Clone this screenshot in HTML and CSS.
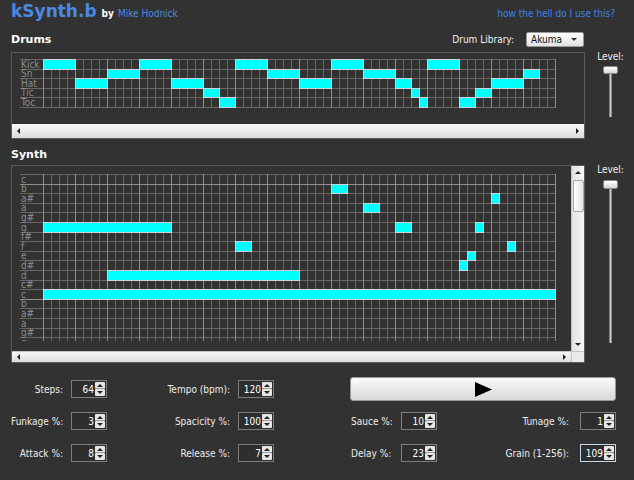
FILE: index.html
```html
<!DOCTYPE html>
<html>
<head>
<meta charset="utf-8">
<title>kSynth.b</title>
<link rel="stylesheet" href="styles.css">
</head>
<body>
<div class="app">
  <header class="top">
    <div class="brand"><span class="logo">kSynth.b</span><span class="by">by</span><a class="author" href="#">Mike Hodnick</a></div>
    <a class="help" href="#">how the hell do I use this?</a>
  </header>

  <div class="section-head">
    <h2>Drums</h2>
    <div class="lib"><span>Drum Library:</span><div class="select"><span>Akuma</span><span class="caret"></span></div></div>
  </div>
  <div class="section">
    <div class="panel">
      <div class="drum-view">
        <div class="seq drum-seq">
          <div class="lbl">Kick</div><div class="lbl">Sn</div><div class="lbl">Hat</div><div class="lbl">Tic</div><div class="lbl">Toc</div>
          <div class="note" style="grid-row:1;grid-column:2 / span 4"></div>
          <div class="note" style="grid-row:1;grid-column:14 / span 4"></div>
          <div class="note" style="grid-row:1;grid-column:26 / span 1"></div>
          <div class="note" style="grid-row:1;grid-column:27 / span 1"></div>
          <div class="note" style="grid-row:1;grid-column:28 / span 1"></div>
          <div class="note" style="grid-row:1;grid-column:29 / span 1"></div>
          <div class="note" style="grid-row:1;grid-column:38 / span 4"></div>
          <div class="note" style="grid-row:1;grid-column:50 / span 4"></div>
          <div class="note" style="grid-row:2;grid-column:10 / span 4"></div>
          <div class="note" style="grid-row:2;grid-column:30 / span 2"></div>
          <div class="note" style="grid-row:2;grid-column:32 / span 2"></div>
          <div class="note" style="grid-row:2;grid-column:42 / span 4"></div>
          <div class="note" style="grid-row:2;grid-column:62 / span 2"></div>
          <div class="note" style="grid-row:3;grid-column:6 / span 4"></div>
          <div class="note" style="grid-row:3;grid-column:18 / span 4"></div>
          <div class="note" style="grid-row:3;grid-column:34 / span 4"></div>
          <div class="note" style="grid-row:3;grid-column:46 / span 2"></div>
          <div class="note" style="grid-row:3;grid-column:58 / span 4"></div>
          <div class="note" style="grid-row:4;grid-column:22 / span 2"></div>
          <div class="note" style="grid-row:4;grid-column:48 / span 1"></div>
          <div class="note" style="grid-row:4;grid-column:56 / span 2"></div>
          <div class="note" style="grid-row:5;grid-column:24 / span 2"></div>
          <div class="note" style="grid-row:5;grid-column:49 / span 1"></div>
          <div class="note" style="grid-row:5;grid-column:54 / span 2"></div>
        </div>
      </div>
      <div class="hscroll drum-h"><span class="ar-l"></span><span class="ar-r"></span></div>
    </div>
    <div class="level">
      <div class="level-lbl">Level:</div>
      <div class="thumb"></div>
      <div class="track drum-track"></div>
    </div>
  </div>

  <div class="section-head synth-head">
    <h2>Synth</h2>
  </div>
  <div class="section synth-section">
    <div class="panel">
      <div class="synth-body">
        <div class="synth-view">
          <div class="clip">
            <div class="seq synth-seq">
              <div class="lbl">c</div><div class="lbl">b</div><div class="lbl">a#</div><div class="lbl">a</div><div class="lbl">g#</div><div class="lbl">g</div><div class="lbl">f#</div><div class="lbl">f</div><div class="lbl">e</div><div class="lbl">d#</div><div class="lbl">d</div><div class="lbl">c#</div><div class="lbl">c</div><div class="lbl">b</div><div class="lbl">a#</div><div class="lbl">a</div><div class="lbl">g#</div><div class="lbl">g</div>
              <div class="note" style="grid-row:2;grid-column:38 / span 2"></div>
              <div class="note" style="grid-row:3;grid-column:58 / span 1"></div>
              <div class="note" style="grid-row:4;grid-column:42 / span 2"></div>
              <div class="note" style="grid-row:6;grid-column:2 / span 16"></div>
              <div class="note" style="grid-row:6;grid-column:46 / span 2"></div>
              <div class="note" style="grid-row:6;grid-column:56 / span 1"></div>
              <div class="note" style="grid-row:8;grid-column:26 / span 2"></div>
              <div class="note" style="grid-row:8;grid-column:60 / span 1"></div>
              <div class="note" style="grid-row:9;grid-column:55 / span 1"></div>
              <div class="note" style="grid-row:10;grid-column:54 / span 1"></div>
              <div class="note" style="grid-row:11;grid-column:10 / span 24"></div>
              <div class="note" style="grid-row:13;grid-column:2 / span 64"></div>
            </div>
          </div>
        </div>
        <div class="vscroll">
          <div class="vbtn"><span class="ar-u"></span></div>
          <div class="vthumb"></div>
          <div class="vspace"></div>
          <div class="vbtn"><span class="ar-d"></span></div>
        </div>
      </div>
      <div class="synth-bottom">
        <div class="hscroll synth-h"><span class="ar-l"></span><span class="ar-r"></span></div>
        <div class="corner"></div>
      </div>
    </div>
    <div class="level">
      <div class="level-lbl">Level:</div>
      <div class="thumb synth-thumb"></div>
      <div class="track synth-track"></div>
    </div>
  </div>

  <div class="controls">
    <div class="lab c1">Steps:</div>
    <div class="num"><span>64</span><div class="spin"><div class="sb up"></div><div class="sb dn"></div></div></div>
    <div class="lab c2">Tempo (bpm):</div>
    <div class="num"><span>120</span><div class="spin"><div class="sb up"></div><div class="sb dn"></div></div></div>
    <div class="play"><svg width="17" height="15" viewBox="0 0 17 15"><path d="M0 0L17 7.5L0 15Z" fill="#000"/></svg></div>

    <div class="lab c1">Funkage %:</div>
    <div class="num"><span>3</span><div class="spin"><div class="sb up"></div><div class="sb dn"></div></div></div>
    <div class="lab c2">Spacicity %:</div>
    <div class="num"><span>100</span><div class="spin"><div class="sb up"></div><div class="sb dn"></div></div></div>
    <div class="lab c3">Sauce %:</div>
    <div class="num"><span>10</span><div class="spin"><div class="sb up"></div><div class="sb dn"></div></div></div>
    <div class="lab c4">Tunage %:</div>
    <div class="num"><span>1</span><div class="spin"><div class="sb up"></div><div class="sb dn"></div></div></div>

    <div class="lab c1">Attack %:</div>
    <div class="num"><span>8</span><div class="spin"><div class="sb up"></div><div class="sb dn"></div></div></div>
    <div class="lab c2">Release %:</div>
    <div class="num"><span>7</span><div class="spin"><div class="sb up"></div><div class="sb dn"></div></div></div>
    <div class="lab c3">Delay %:</div>
    <div class="num"><span>23</span><div class="spin"><div class="sb up"></div><div class="sb dn"></div></div></div>
    <div class="lab c4">Grain (1-256):</div>
    <div class="num focus"><span>109</span><div class="spin"><div class="sb up"></div><div class="sb dn"></div></div></div>
  </div>
</div>
</body>
</html>
```

FILE: styles.css
```css
* { box-sizing: border-box; }
html, body { margin: 0; padding: 0; }
body {
  background: #323232;
  color: #e8e8e8;
  font-family: "DejaVu Sans Condensed", "DejaVu Sans", sans-serif;
  font-size: 10px;
  width: 634px;
  height: 480px;
  overflow: hidden;
}
.app { padding-left: 11px; }

/* header */
.top {
  display: flex;
  justify-content: space-between;
  align-items: baseline;
  height: 28px;
  padding-right: 19px;
}
.brand { display: flex; align-items: baseline; }
.logo {
  font-family: "DejaVu Sans", sans-serif;
  font-weight: bold;
  font-size: 17px;
  line-height: 22px;
  color: #4a89e4;
}
.by { color: #fff; font-weight: bold; margin-left: 5px; }
.author { color: #4a89e4; text-decoration: none; margin-left: 4px; }
.help { color: #3f82ea; text-decoration: none; }

/* section heads */
.section-head {
  display: flex;
  justify-content: space-between;
  align-items: center;
  width: 573px;
  height: 15px;
  margin-top: 4px;
}
.synth-head { margin-top: 8px; }
h2 {
  margin: 0;
  font-family: "DejaVu Sans", sans-serif;
  font-weight: bold;
  font-size: 11px;
  line-height: 15px;
  color: #fff;
}
.lib { display: flex; align-items: center; gap: 12px; color: #f0f0f0; }
.select {
  width: 58px;
  height: 15px;
  background: linear-gradient(#ffffff, #e2e2e2);
  border: 1px solid #9a9a9a;
  border-radius: 2px;
  color: #111;
  display: flex;
  align-items: center;
  justify-content: space-between;
  padding: 0 6px 0 4px;
}
.caret {
  width: 0; height: 0;
  border-top: 3px solid #333;
  border-left: 3px solid transparent;
  border-right: 3px solid transparent;
}

/* sections */
.section { display: flex; gap: 13px; margin-top: 5px; align-items: flex-start; }
.synth-section { margin-top: 3px; }
.panel { width: 574px; border: 1px solid #5c5c5c; }
.drum-view { height: 71px; padding: 6px 0 0 8px; }

.seq {
  --ln: #676767;
  --bt: #8e8e8e;
  display: grid;
  grid-template-columns: 23px repeat(64, 8px) 1px;
  width: 536px;
  background:
    repeating-linear-gradient(to right, var(--bt) 0 1px, transparent 1px 32px) 23px 0 / 513px 100% no-repeat,
    repeating-linear-gradient(to right, var(--ln) 0 1px, transparent 1px 8px) 23px 0 / 513px 100% no-repeat,
    repeating-linear-gradient(to bottom, var(--ln) 0 1px, transparent 1px 10px, var(--ln) 10px 11px, transparent 11px 19px, var(--ln) 19px 20px, transparent 20px 29px, var(--ln) 29px 30px, transparent 30px 38px, var(--ln) 38px 39px, transparent 39px 48px);
}
.drum-seq { grid-template-rows: 10px 9px 10px 9px 10px 1px; }
.synth-seq {
  grid-template-rows: repeat(4, 10px 9px 10px 9px 10px);
  background:
    linear-gradient(var(--bt), var(--bt)) 0 10px / 100% 1px no-repeat,
    linear-gradient(var(--bt), var(--bt)) 0 125px / 100% 1px no-repeat,
    repeating-linear-gradient(to right, var(--bt) 0 1px, transparent 1px 32px) 23px 0 / 513px 100% no-repeat,
    repeating-linear-gradient(to right, var(--ln) 0 1px, transparent 1px 8px) 23px 0 / 513px 100% no-repeat,
    repeating-linear-gradient(to bottom, var(--ln) 0 1px, transparent 1px 10px, var(--ln) 10px 11px, transparent 11px 19px, var(--ln) 19px 20px, transparent 20px 29px, var(--ln) 29px 30px, transparent 30px 38px, var(--ln) 38px 39px, transparent 39px 48px);
}
.lbl {
  grid-column: 1;
  align-self: end;
  font-size: 10px;
  line-height: 9px;
  height: 9px;
  color: #8c8c8c;
  padding-left: 1px;
  white-space: nowrap;
}
.note {
  background: #00ffff;
  border: 1px solid #d2d2d2;
  margin: 0 -1px -1px 0;
}

/* scrollbars */
.hscroll {
  display: flex;
  justify-content: space-between;
  align-items: center;
  background: linear-gradient(#f7f7f7, #dcdcdc);
  padding: 0 5px;
}
.drum-h { height: 14px; }
.synth-h { height: 11px; flex: 1; border-top: 1px solid #c4c4c4; }
.ar-l { width: 0; height: 0; border-right: 3px solid #222; border-top: 3px solid transparent; border-bottom: 3px solid transparent; }
.ar-r { width: 0; height: 0; border-left: 3px solid #222; border-top: 3px solid transparent; border-bottom: 3px solid transparent; }
.ar-u { width: 0; height: 0; border-bottom: 3px solid #222; border-left: 3px solid transparent; border-right: 3px solid transparent; }
.ar-d { width: 0; height: 0; border-top: 3px solid #222; border-left: 3px solid transparent; border-right: 3px solid transparent; }

.synth-body { display: flex; height: 185px; }
.synth-view { flex: 1; padding: 8px 0 0 8px; }
.clip { height: 167px; overflow: hidden; }
.vscroll {
  width: 13px;
  display: flex;
  flex-direction: column;
  align-items: center;
  background: linear-gradient(to right, #e2e2e2, #f8f8f8);
  border-left: 1px solid #c4c4c4;
}
.vbtn { height: 13px; display: flex; align-items: center; justify-content: center; }
.vthumb {
  width: 11px;
  height: 32px;
  margin-top: 1px;
  border: 1px solid #a8a8a8;
  border-radius: 2px;
  background: linear-gradient(to right, #ffffff, #e4e4e4);
}
.vspace { flex: 1; }
.synth-bottom { display: flex; height: 11px; }
.corner { width: 13px; background: #eaeaea; border-left: 1px solid #c4c4c4; border-top: 1px solid #c4c4c4; }

/* level slider */
.level { width: 25px; display: flex; flex-direction: column; align-items: center; }
.level-lbl { color: #f0f0f0; line-height: 12px; margin-top: -1px; }
.thumb {
  width: 15px;
  height: 8px;
  margin-top: 3px;
  border: 1px solid #8a8a8a;
  border-radius: 2px;
  background: linear-gradient(#ffffff, #d6d6d6);
}
.synth-thumb { height: 9px; margin-top: 4px; }
.track {
  width: 3px;
  background: #c8c8c8;
  border-left: 1px solid #8a8a8a;
  border-right: 1px solid #8a8a8a;
}
.drum-track { height: 43px; }
.synth-track { height: 154px; }

/* controls */
.controls {
  display: grid;
  grid-template-columns: 60px 36px 131px 36px 127px 36px 143px 36px;
  grid-auto-rows: 32px;
  align-items: center;
  margin-top: 10px;
}
.lab { white-space: nowrap; color: #ececec; }
.c1 { text-align: right; padding-right: 8px; }
.c2 { text-align: right; padding-right: 8px; }
.c3 { text-align: left; padding-left: 77px; }
.c4 { text-align: right; padding-right: 11px; }
.num {
  height: 18px;
  display: flex;
  align-items: center;
  justify-content: flex-end;
  gap: 1px;
  padding-right: 1px;
  border: 1px solid #7e7e7e;
  background: #2e2e2e;
  color: #fff;
}
.num.focus { border-color: #c4d6ea; }
.spin { display: flex; flex-direction: column; gap: 0; }
.sb {
  width: 10px;
  height: 7px;
  background: #e6e6e6;
  border-radius: 1px;
  display: flex;
  align-items: center;
  justify-content: center;
}
.sb.up { border-bottom: 1px solid #9a9a9a; }
.sb.up::after { content: ""; border-bottom: 3px solid #222; border-left: 3px solid transparent; border-right: 3px solid transparent; }
.sb.dn::after { content: ""; border-top: 3px solid #222; border-left: 3px solid transparent; border-right: 3px solid transparent; }
.play {
  grid-column: 5 / 9;
  grid-row: 1;
  justify-self: end;
  width: 266px;
  height: 24px;
  border: 1px solid #9a9a9a;
  border-radius: 3px;
  background: linear-gradient(#fbfbfb, #d8d8d8);
  display: flex;
  align-items: center;
  justify-content: center;
}
.play svg { display: block; }
```
